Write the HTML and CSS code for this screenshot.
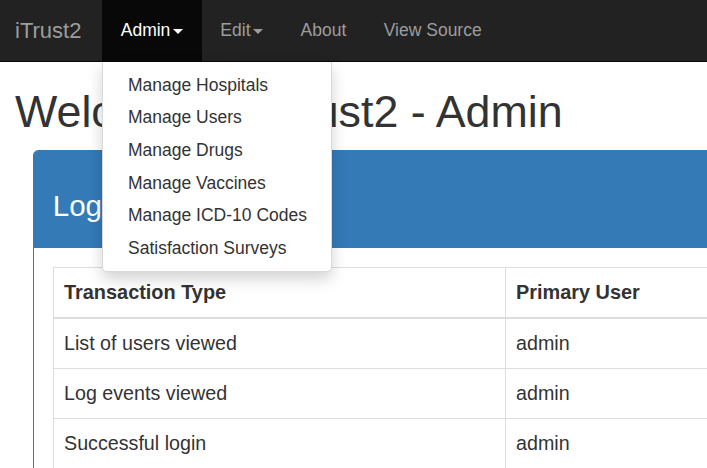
FILE: index.html
```html
<!DOCTYPE html>
<html lang="en">
<head>
<meta charset="utf-8">
<title>iTrust2 - Admin</title>
<link rel="stylesheet" href="styles.css">
</head>
<body>
<nav class="navbar">
  <a class="brand" href="#">iTrust2</a>
  <ul class="nav">
    <li class="nav-item dropdown active">
      <a class="nav-link" href="#">Admin<span class="caret"></span></a>
      <ul class="dropdown-menu">
        <li><a href="#">Manage Hospitals</a></li>
        <li><a href="#">Manage Users</a></li>
        <li><a href="#">Manage Drugs</a></li>
        <li><a href="#">Manage Vaccines</a></li>
        <li><a href="#">Manage ICD-10 Codes</a></li>
        <li><a href="#">Satisfaction Surveys</a></li>
      </ul>
    </li>
    <li class="nav-item"><a class="nav-link" href="#">Edit<span class="caret"></span></a></li>
    <li class="nav-item"><a class="nav-link" href="#">About</a></li>
    <li class="nav-item"><a class="nav-link" href="#">View Source</a></li>
  </ul>
</nav>
<main class="content">
  <h1 class="page-title">Welcome to iTrust2 - Admin</h1>
  <section class="panel">
    <div class="panel-heading"><h3 class="panel-title">Log Entries</h3></div>
    <div class="panel-body">
      <table class="log-table">
        <thead>
          <tr><th class="col-type">Transaction Type</th><th>Primary User</th></tr>
        </thead>
        <tbody>
          <tr><td>List of users viewed</td><td>admin</td></tr>
          <tr><td>Log events viewed</td><td>admin</td></tr>
          <tr><td>Successful login</td><td>admin</td></tr>
        </tbody>
      </table>
    </div>
  </section>
</main>
</body>
</html>
```
FILE: styles.css
```css
html, body {
  margin: 0;
  padding: 0;
  overflow: hidden;
  background: #fff;
}
body {
  font-family: "Liberation Sans", Arial, sans-serif;
  color: #333;
  width: 707px;
  height: 468px;
}
a { text-decoration: none; }

.navbar {
  display: flex;
  align-items: stretch;
  height: 61px;
  background: #222;
  border-bottom: 1px solid #080808;
}
.brand {
  display: block;
  box-sizing: border-box;
  width: 102px;
  padding-left: 15px;
  font-size: 22px;
  line-height: 61px;
  color: #9d9d9d;
}
.nav {
  display: flex;
  list-style: none;
  margin: 0;
  padding: 0;
}
.nav-item {
  position: relative;
}
.nav-link {
  display: block;
  padding: 18px 18.75px 18px;
  font-size: 17.5px;
  line-height: 25px;
  color: #9d9d9d;
  white-space: nowrap;
}
.active > .nav-link {
  background: #080808;
  color: #fff;
}
.caret {
  display: inline-block;
  width: 0;
  height: 0;
  margin-left: 2.5px;
  vertical-align: middle;
  border-top: 5px solid;
  border-left: 5px solid transparent;
  border-right: 5px solid transparent;
}

.dropdown-menu {
  position: absolute;
  top: 62px;
  left: 0;
  z-index: 10;
  box-sizing: border-box;
  width: 230px;
  margin: 0;
  padding: 7px 0 6px;
  list-style: none;
  background: #fff;
  border: 1px solid rgba(0, 0, 0, 0.15);
  border-top: 0;
  border-radius: 0 0 5px 5px;
  box-shadow: 0 7px 15px rgba(0, 0, 0, 0.175);
}
.dropdown-menu a {
  display: block;
  padding: 3.8px 25px;
  font-size: 17.5px;
  line-height: 25px;
  color: #333;
  white-space: nowrap;
}

.content {
  padding: 0;
}
.page-title {
  margin: 25px 0 13.5px 15px;
  font-size: 44.8px;
  line-height: 49.5px;
  font-weight: 500;
  color: #333;
  white-space: nowrap;
}
.panel {
  margin-left: 33px;
  width: 900px;
  border: 1px solid #337ab7;
  border-radius: 5px;
  background: #fff;
}
.panel-heading {
  padding: 12.5px 18.75px 13.5px;
  background: #337ab7;
  color: #fff;
  border-radius: 4px 4px 0 0;
}
.panel-title {
  margin: 25px 0 12.5px;
  font-size: 29.5px;
  line-height: 33px;
  font-weight: 500;
}
.panel-body {
  padding: 19px 18.75px 18.75px 19px;
}
.log-table {
  width: 100%;
  border-collapse: collapse;
  border: 1px solid #ddd;
  font-size: 19.7px;
  line-height: 29px;
}
.log-table th,
.log-table td {
  padding: 10px;
  border: 1px solid #ddd;
  text-align: left;
  vertical-align: top;
}
.log-table th {
  font-weight: bold;
  font-size: 19.9px;
  border-bottom: 2px solid #ddd;
}
.log-table .col-type {
  width: 431px;
}
```
